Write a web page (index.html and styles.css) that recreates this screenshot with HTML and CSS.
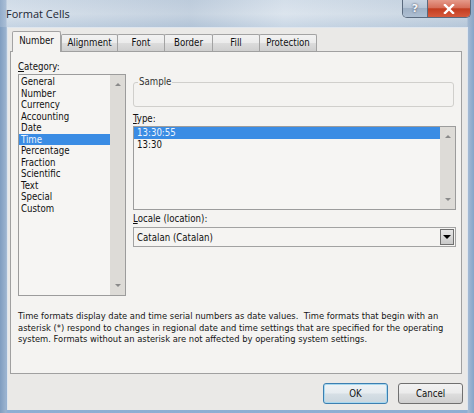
FILE: index.html
```html
<!DOCTYPE html>
<html>
<head>
<meta charset="utf-8">
<link rel="stylesheet" href="styles.css">
</head>
<body>
<div class="window">
  <div class="titlebar">
    <span class="title">Format Cells</span>
    <div class="caption-btns">
      <div class="cap help">?</div>
      <div class="cap close">
        <svg width="12" height="10" viewBox="0 0 12 10"><path d="M2 1 L10 9 M10 1 L2 9" stroke="#fff" stroke-width="2.4" stroke-linecap="square"/></svg>
      </div>
    </div>
  </div>
  <div class="client">
    <div class="tabs">
      <div class="tab sel t-number">Number</div>
      <div class="tab t-align">Alignment</div>
      <div class="tab t-font">Font</div>
      <div class="tab t-border">Border</div>
      <div class="tab t-fill">Fill</div>
      <div class="tab t-prot">Protection</div>
    </div>
    <div class="panel">
      <div class="cols">
        <div class="leftcol">
          <div class="label"><u>C</u>ategory:</div>
          <div class="listbox catlist">
            <div class="items">
              <div class="item">General</div>
              <div class="item">Number</div>
              <div class="item">Currency</div>
              <div class="item">Accounting</div>
              <div class="item">Date</div>
              <div class="item selected">Time</div>
              <div class="item">Percentage</div>
              <div class="item">Fraction</div>
              <div class="item">Scientific</div>
              <div class="item">Text</div>
              <div class="item">Special</div>
              <div class="item">Custom</div>
            </div>
            <div class="scroll">
              <span class="arr up"></span>
              <span class="arr down"></span>
            </div>
          </div>
        </div>
        <div class="rightcol">
          <fieldset class="sample">
            <legend>Sample</legend>
            <div class="sample-body"></div>
          </fieldset>
          <div class="label type-label"><u>T</u>ype:</div>
          <div class="listbox typelist">
            <div class="items">
              <div class="item selected">13:30:55</div>
              <div class="item">13:30</div>
            </div>
            <div class="scroll">
              <span class="arr up"></span>
              <span class="arr down"></span>
            </div>
          </div>
          <div class="label locale-label"><u>L</u>ocale (location):</div>
          <div class="combo">
            <span class="combo-text">Catalan (Catalan)</span>
            <span class="combo-btn"><span class="tri"></span></span>
          </div>
        </div>
      </div>
      <p class="desc">Time formats display date and time serial numbers as date values.&nbsp; Time formats that begin with an<br>asterisk (*) respond to changes in regional date and time settings that are specified for the operating<br>system. Formats without an asterisk are not affected by operating system settings.</p>
    </div>
    <div class="buttons">
      <div class="btn ok">OK</div>
      <div class="btn">Cancel</div>
    </div>
  </div>
</div>
</body>
</html>
```
FILE: styles.css
```css
html, body {
  margin: 0;
  padding: 0;
}
body {
  width: 474px;
  height: 413px;
  overflow: hidden;
  font-family: "DejaVu Sans Condensed", "DejaVu Sans", sans-serif;
  font-size: 9.6px;
  color: #111;
}
.window {
  width: 474px;
  height: 413px;
  background:
    linear-gradient(90deg, #7f9dc0 0, #9bb3cf 6px, rgba(0,0,0,0) 7px, rgba(0,0,0,0) 467px, #a4bad4 468px, #86a5c9 474px),
    linear-gradient(180deg, #c9d6e4 0, #d3dee9 14px, #bccddf 27px, #a7bdd6 300px, #8eaed3 413px);
  display: flex;
  flex-direction: column;
}
.titlebar {
  height: 27px;
  display: flex;
  align-items: flex-start;
  background: linear-gradient(90deg, rgba(255,255,255,0.15), rgba(140,160,185,0.2) 40%, rgba(255,255,255,0.2) 60%, rgba(150,170,190,0.2));
}
.title {
  font-family: "Open Sans", "Noto Sans", sans-serif;
  font-size: 11px;
  line-height: 12px;
  color: #1c2733;
  margin: 8px 0 0 6px;
}
.caption-btns {
  margin-left: auto;
  margin-right: 3px;
  display: flex;
  border: 1px solid #5a6a7e;
  border-top: none;
  border-radius: 0 0 5px 5px;
  overflow: hidden;
  height: 17px;
}
.cap {
  height: 17px;
  display: flex;
  align-items: center;
  justify-content: center;
}
.help {
  width: 24px;
  background: linear-gradient(180deg, #c8d4e2 0, #b6c5d6 45%, #9fb1c6 50%, #aebfd2 100%);
  font-family: "DejaVu Sans", sans-serif;
  font-weight: bold;
  font-size: 11px;
  color: #f4f6f9;
  text-shadow: 0 0 2px #334;
  border-right: 1px solid #5a6a7e;
}
.close {
  width: 42px;
  background: linear-gradient(180deg, #e59a8a 0, #d66f5a 45%, #c33d20 52%, #d65a3c 100%);
}
.client {
  flex: 1;
  margin: 0 6px 3px 7px;
  background: #eae9e7;
  border: 1px solid #dfe6ee;
  border-bottom: none;
  padding: 3px 0 0 2px;
  display: flex;
  flex-direction: column;
}
.tabs {
  display: flex;
  align-items: flex-end;
  height: 20px;
  padding-left: 2px;
  position: relative;
  z-index: 1;
}
.tab {
  height: 17px;
  box-sizing: border-box;
  border: 1px solid #a3a3a3;
  border-bottom: none;
  margin-left: -1px;
  background: linear-gradient(180deg, #f2f2f2 0, #ebebeb 50%, #dcdcdc 51%, #cfcfcf 100%);
  display: flex;
  align-items: center;
  justify-content: center;
  line-height: 12px;
  border-radius: 2px 2px 0 0;
}
.tab.sel {
  height: 21px;
  margin-bottom: -1px;
  background: #f4f3f1;
  margin-left: 0;
  margin-right: 1px;
  padding-bottom: 2px;
}
.t-number { width: 49px; }
.t-align { width: 57px; }
.t-font { width: 48px; }
.t-border { width: 49px; }
.t-fill { width: 48px; }
.t-prot { width: 58px; }
.panel {
  margin-right: 5px;
  height: 323px;
  box-sizing: border-box;
  border: 1px solid #a0a0a0;
  background: #f4f3f1;
  padding: 9px 5px 0 7px;
}
.cols {
  display: flex;
  gap: 7px;
}
.leftcol {
  width: 108px;
}
.rightcol {
  flex: 1;
}
.label {
  line-height: 12px;
  height: 12px;
  color: #111;
}
.listbox {
  box-sizing: border-box;
  border: 1px solid #9c9c9c;
  background: #f6f5f3;
  display: flex;
  margin-top: 1px;
}
.catlist {
  height: 222px;
}
.items {
  flex: 1;
  padding-top: 1px;
}
.item {
  line-height: 11.5px;
  height: 11.5px;
  padding-left: 2px;
  white-space: nowrap;
}
.item.selected {
  background: #3a8ce4;
  color: #eef5fd;
}
.typelist .item {
  line-height: 12px;
  height: 12px;
  padding-left: 3px;
}
.typelist .items {
  padding-top: 0;
}
.scroll {
  width: 15px;
  background: #dddbd7;
  display: flex;
  flex-direction: column;
  justify-content: space-between;
  align-items: center;
  padding: 8px 0 8px;
  box-sizing: border-box;
}
.arr {
  width: 0;
  height: 0;
  border-left: 3px solid transparent;
  border-right: 3px solid transparent;
}
.arr.up {
  border-bottom: 3px solid #8a8a8a;
}
.arr.down {
  border-top: 3px solid #8a8a8a;
}
.sample {
  margin: 15px 2px 0 0;
  padding: 0 0 0 4px;
  border: 1px solid #d0cfcc;
  border-radius: 3px;
  min-inline-size: 0;
}
.sample legend {
  padding: 0 1px;
  line-height: 12px;
  color: #333;
}
.sample-body {
  height: 18px;
}
.type-label {
  margin-top: 6px;
}
.typelist {
  height: 84px;
}
.locale-label {
  margin-top: 3px;
}
.combo {
  margin-top: 2px;
  height: 20px;
  box-sizing: border-box;
  border: 1px solid #a2a2a2;
  background: #f5f4f2;
  display: flex;
  align-items: center;
  padding: 0 1px 0 3px;
}
.combo-text {
  flex: 1;
}
.combo-btn {
  width: 14px;
  height: 16px;
  box-sizing: border-box;
  border: 1px solid #6f6f6f;
  background: linear-gradient(180deg, #e6e6e6, #c9c9c9);
  display: flex;
  align-items: center;
  justify-content: center;
}
.tri {
  width: 0;
  height: 0;
  border-left: 4px solid transparent;
  border-right: 4px solid transparent;
  border-top: 4px solid #000;
}
.desc {
  margin: 14px 0 0 0;
  font-size: 9.3px;
  line-height: 11.5px;
  color: #151515;
  white-space: nowrap;
}
.buttons {
  display: flex;
  justify-content: flex-end;
  gap: 10px;
  margin-top: 9px;
  margin-right: 4px;
}
.btn {
  width: 65px;
  height: 21px;
  box-sizing: border-box;
  border: 1px solid #707070;
  border-radius: 3px;
  background: linear-gradient(180deg, #f2f2f2 0, #ebebeb 48%, #dddddd 52%, #cfcfcf 100%);
  display: flex;
  align-items: center;
  justify-content: center;
  color: #111;
}
.btn.ok {
  border-color: #3c7fb1;
  box-shadow: inset 0 0 0 1px #a8d8ef;
  background: linear-gradient(180deg, #eef3f6 0, #e6ecf0 48%, #d6dfe5 52%, #cad6de 100%);
}
```
